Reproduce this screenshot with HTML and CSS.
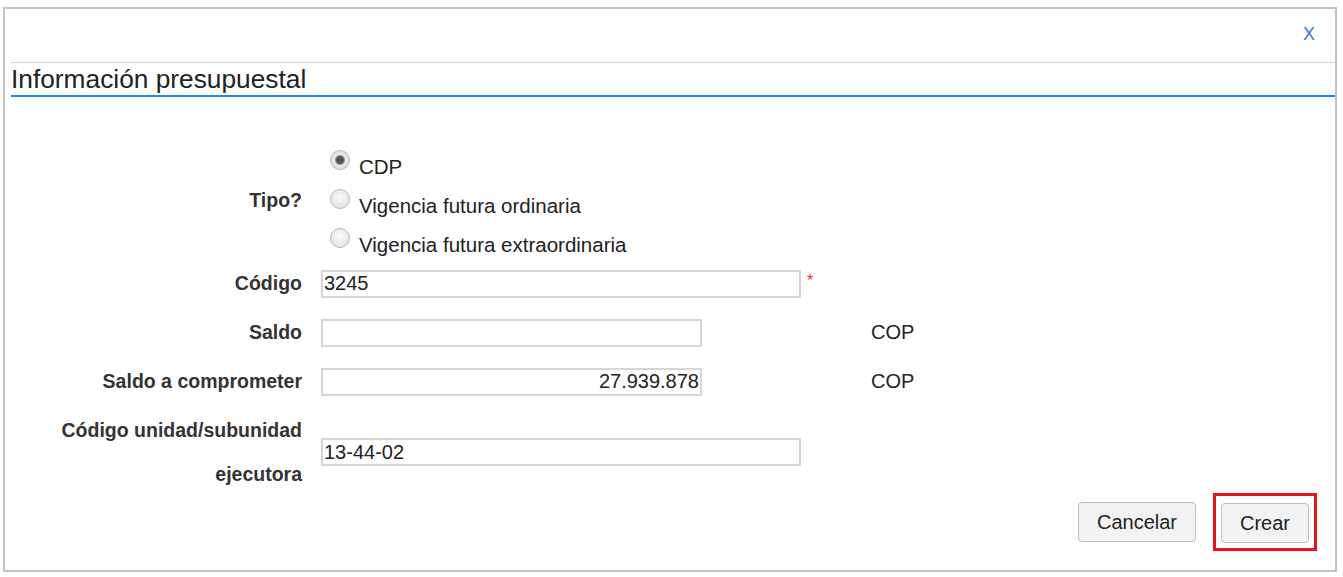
FILE: index.html
```html
<!DOCTYPE html>
<html lang="es">
<head>
    <meta charset="utf-8">
    <title>Información presupuestal</title>
    <link rel="stylesheet" href="styles.css">
</head>
<body>
    <div class="dialog">
        <div class="dialog-top">
            <a class="close" href="#">X</a>
        </div>
        <div class="dialog-title">Información presupuestal</div>

        <form class="form">
            <div class="row row-tipo">
                <label class="label">Tipo?</label>
                <div class="radios">
                    <label class="radio"><input type="radio" name="tipo" checked><span>CDP</span></label>
                    <label class="radio"><input type="radio" name="tipo"><span>Vigencia futura ordinaria</span></label>
                    <label class="radio"><input type="radio" name="tipo"><span>Vigencia futura extraordinaria</span></label>
                </div>
            </div>
            <div class="row">
                <label class="label">Código</label>
                <input type="text" class="field wide" value="3245">
                <span class="required">*</span>
            </div>
            <div class="row">
                <label class="label">Saldo</label>
                <input type="text" class="field">
                <span class="unit">COP</span>
            </div>
            <div class="row">
                <label class="label">Saldo a comprometer</label>
                <input type="text" class="field number" value="27.939.878">
                <span class="unit">COP</span>
            </div>
            <div class="row row-tall">
                <label class="label">Código unidad/subunidad ejecutora</label>
                <input type="text" class="field wide" value="13-44-02">
            </div>
        </form>

        <div class="footer">
            <button class="btn" type="button">Cancelar</button>
            <span class="highlight"><button class="btn" type="button">Crear</button></span>
        </div>
    </div>
</body>
</html>
```

FILE: styles.css
```css
body {
    margin: 0;
    background: #fff;
    font-family: "Liberation Sans", Arial, sans-serif;
    color: #222;
}
.dialog {
    box-sizing: border-box;
    width: 1334px;
    height: 565px;
    margin: 7px 0 0 3px;
    border: 2px solid #c4c4c4;
    padding-left: 6px;
}
.dialog-top {
    display: flex;
    justify-content: flex-end;
    padding: 15px 20px 18px 0;
}
.close {
    font-size: 18px;
    line-height: 20px;
    color: #3a7bd5;
    text-decoration: none;
}
.dialog-title {
    border-top: 1px solid #d2d2d2;
    border-bottom: 2px solid #1e88e5;
    padding: 1px 0 1px 0;
    font-size: 26.3px;
    line-height: 30px;
    color: #222;
}
.form {
    margin-top: 45px;
}
.row {
    display: flex;
    align-items: center;
    height: 49px;
}
.label {
    box-sizing: border-box;
    width: 297px;
    margin-left: -6px;
    margin-right: 19px;
    text-align: right;
    font-size: 19.5px;
    font-weight: bold;
    color: #333;
}
.row-tipo {
    height: 117px;
}
.radios {
    display: flex;
    flex-direction: column;
    padding-left: 9px;
}
.radio {
    display: flex;
    align-items: center;
    height: 39px;
    font-size: 20.5px;
    color: #222;
}
.radio span {
    margin-top: 10px;
}
.radio input {
    appearance: none;
    -webkit-appearance: none;
    box-sizing: border-box;
    width: 20px;
    height: 20px;
    margin: -3px 9px 0 0;
    border: 1px solid #b9b9b9;
    border-radius: 50%;
    background: radial-gradient(circle at 50% 40%, #fbfbfb 0%, #e4e4e4 70%, #d6d6d6 100%);
}
.radio input:checked {
    background: radial-gradient(circle, #555 0, #5a5a5a 3.5px, #9a9a9a 4.5px, #e8e8e8 5.5px, #dcdcdc 100%);
}
.field {
    box-sizing: border-box;
    width: 381px;
    height: 28px;
    border: 2px solid #d6d6d6;
    padding: 0 1px;
    font-family: "Liberation Sans", Arial, sans-serif;
    font-size: 20px;
    color: #222;
    outline: none;
}
.field.wide {
    width: 480px;
}
.field.number {
    text-align: right;
}
.required {
    margin: -6px 0 0 6px;
    color: #f0303a;
    font-size: 16px;
}
.unit {
    margin-left: 169px;
    font-size: 20px;
    color: #222;
}
.row-tall {
    height: 88px;
    margin-top: 2px;
}
.row-tall .label {
    line-height: 44px;
}
.footer {
    display: flex;
    justify-content: flex-end;
    align-items: center;
    margin-top: -3px;
    padding-right: 18px;
}
.btn {
    height: 40px;
    padding: 0 18px;
    border: 1px solid #bdbdbd;
    border-radius: 4px;
    background: #f3f3f3;
    font-family: "Liberation Sans", Arial, sans-serif;
    font-size: 20px;
    color: #222;
}
.highlight {
    display: inline-flex;
    margin-left: 17px;
    padding: 7px 5px 5px 5px;
    border: 3px solid #e8141c;
}
```
